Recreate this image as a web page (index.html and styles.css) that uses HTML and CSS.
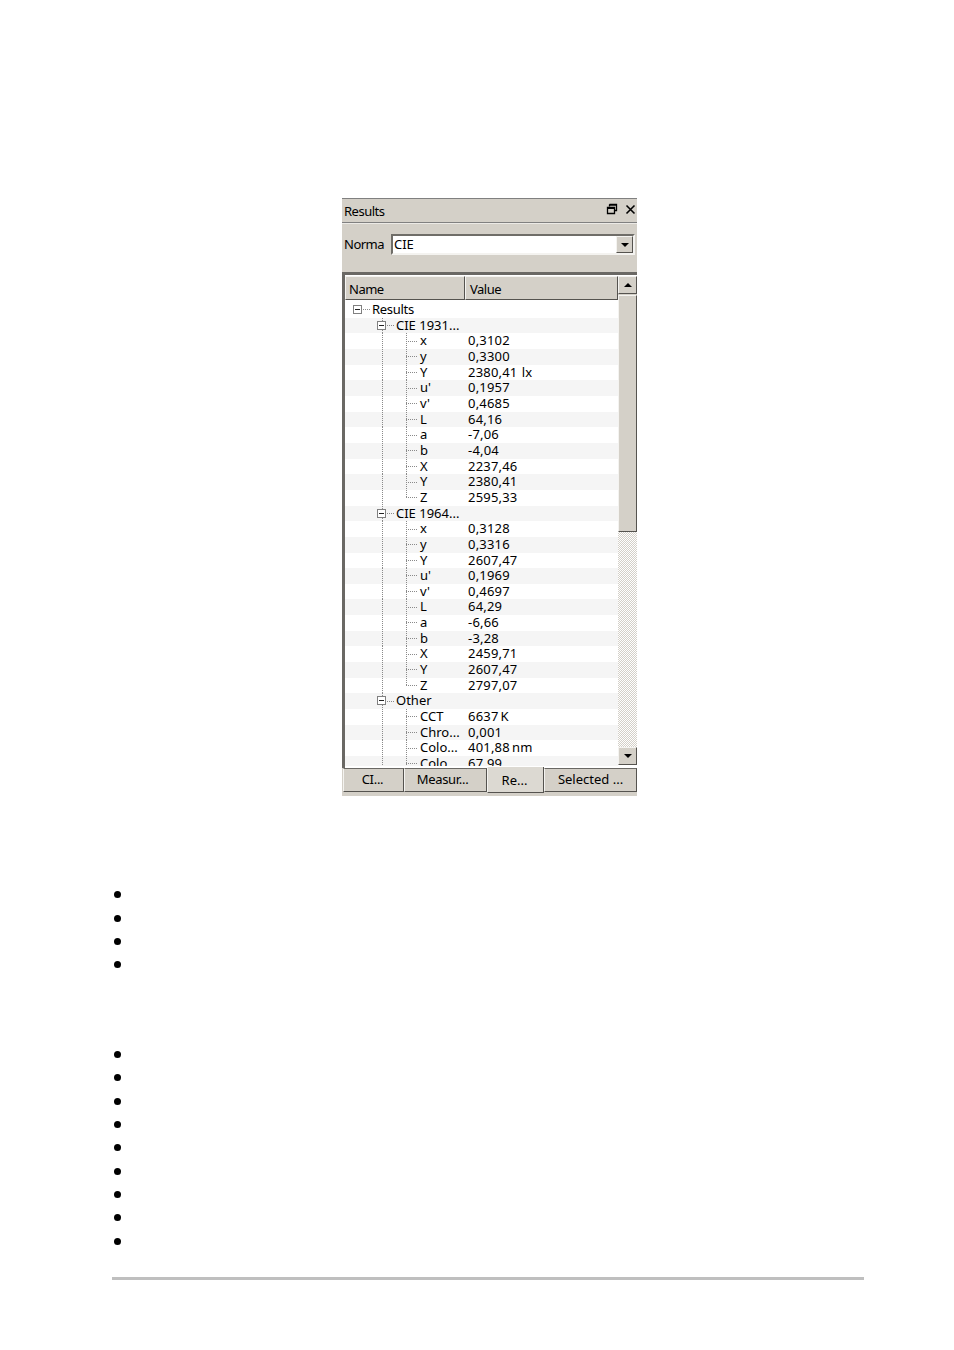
FILE: index.html
```html
<!DOCTYPE html>
<html lang="en">
<head>
    <meta charset="UTF-8">
    <title>Results</title>
    <link rel="stylesheet" href="styles.css">
</head>
<body>
    <div class="page">
        <div class="panel">
            <div class="title-bar">
                <span class="label">Results</span>
                <div class="title-icons">
                    <svg width="12" height="12" viewBox="0 0 12 12"><path d="M3.5 1.5h7v6h-2M3.5 1.5v2M3 2h7.5" fill="none" stroke="#000" stroke-width="1.3"/><path d="M1.5 4.5h7v6h-7z" fill="none" stroke="#000" stroke-width="1.3"/><path d="M1 5.2h8" stroke="#000" stroke-width="1.6"/></svg>
                    <svg width="11" height="11" viewBox="0 0 11 11"><path d="M1.5 1.5l8 8M9.5 1.5l-8 8" stroke="#000" stroke-width="1.6"/></svg>
                </div>
            </div>
            <div class="norma-row">
                <span class="norma-label label">Norma</span>
                <div class="combo">
                    <span class="combo-text">CIE</span>
                    <span class="arrow-btn"><i class="tri-down"></i></span>
                </div>
            </div>
            <div class="tree-frame">
                <div class="tree-main">
                    <div class="tree-head">
                        <div class="head-cell name-cell label">Name</div>
                        <div class="head-cell value-cell label">Value</div>
                    </div>
                    <div class="tree-body">
                        <div class="row root"><span class="box"></span><span>Results</span></div>
                        <div class="row group alt"><span class="box"></span><span>CIE 1931...</span></div>
                        <div class="row leaf"><span>x</span><span>0,3102</span></div>
                        <div class="row leaf alt"><span>y</span><span>0,3300</span></div>
                        <div class="row leaf"><span>Y</span><span>2380,41 &nbsp;lx</span></div>
                        <div class="row leaf alt"><span>u'</span><span>0,1957</span></div>
                        <div class="row leaf"><span>v'</span><span>0,4685</span></div>
                        <div class="row leaf alt"><span>L</span><span>64,16</span></div>
                        <div class="row leaf"><span>a</span><span>-7,06</span></div>
                        <div class="row leaf alt"><span>b</span><span>-4,04</span></div>
                        <div class="row leaf"><span>X</span><span>2237,46</span></div>
                        <div class="row leaf alt"><span>Y</span><span>2380,41</span></div>
                        <div class="row leaf last"><span>Z</span><span>2595,33</span></div>
                        <div class="row group alt"><span class="box"></span><span>CIE 1964...</span></div>
                        <div class="row leaf"><span>x</span><span>0,3128</span></div>
                        <div class="row leaf alt"><span>y</span><span>0,3316</span></div>
                        <div class="row leaf"><span>Y</span><span>2607,47</span></div>
                        <div class="row leaf alt"><span>u'</span><span>0,1969</span></div>
                        <div class="row leaf"><span>v'</span><span>0,4697</span></div>
                        <div class="row leaf alt"><span>L</span><span>64,29</span></div>
                        <div class="row leaf"><span>a</span><span>-6,66</span></div>
                        <div class="row leaf alt"><span>b</span><span>-3,28</span></div>
                        <div class="row leaf"><span>X</span><span>2459,71</span></div>
                        <div class="row leaf alt"><span>Y</span><span>2607,47</span></div>
                        <div class="row leaf last"><span>Z</span><span>2797,07</span></div>
                        <div class="row group alt"><span class="box"></span><span>Other</span></div>
                        <div class="row leaf"><span>CCT</span><span>6637 K</span></div>
                        <div class="row leaf alt"><span>Chro...</span><span>0,001</span></div>
                        <div class="row leaf"><span>Colo...</span><span>401,88 nm</span></div>
                        <div class="row leaf alt"><span>Colo...</span><span>67,99</span></div>
                    </div>
                </div>
                <div class="scrollbar">
                    <span class="arrow-btn scroll-btn"><i class="tri-up"></i></span>
                    <div class="thumb"></div>
                    <div class="track"></div>
                    <span class="arrow-btn scroll-btn"><i class="tri-down"></i></span>
                </div>
            </div>
            <div class="tabs">
                <div class="tab tab-ci">CI...</div>
                <div class="tab tab-measure">Measur...</div>
                <div class="tab tab-active">Re...</div>
                <div class="tab tab-selected">Selected ...</div>
            </div>
        </div>

        <ul class="bullets first-list">
            <li></li>
            <li></li>
            <li></li>
            <li></li>
        </ul>
        <ul class="bullets second-list">
            <li></li>
            <li></li>
            <li></li>
            <li></li>
            <li></li>
            <li></li>
            <li></li>
            <li></li>
            <li></li>
        </ul>
        <div class="footer-rule"></div>
    </div>
</body>
</html>
```

FILE: styles.css
```css
body {
    margin: 0;
    background: #fff;
    font-family: "Noto Sans", sans-serif;
    font-size: 13px;
    color: #000;
}

.page {
    width: 752px;
    margin-left: 112px;
    padding-top: 198px;
}

.label {
    letter-spacing: -0.5px;
}

/* docked window */
.panel {
    width: 295px;
    height: 598px;
    margin-left: 230px;
    background: #d4d0c8;
    display: flex;
    flex-direction: column;
}

.title-bar {
    height: 25px;
    box-sizing: border-box;
    border-top: 1px solid #808080;
    border-bottom: 1px solid #808080;
    padding: 0 1px 0 2px;
    display: flex;
    align-items: center;
    justify-content: space-between;
}

.title-icons {
    display: flex;
    align-items: center;
    gap: 7px;
    margin-top: -3px;
}

.norma-row {
    height: 49px;
    box-sizing: border-box;
    border-top: 1px solid #eceae6;
    padding: 10px 2px 0 2px;
    display: flex;
    align-items: flex-start;
}

.norma-label {
    width: 47px;
    line-height: 20px;
}

.combo {
    flex: 1;
    height: 21px;
    box-sizing: border-box;
    background: #fff;
    border: 2px solid;
    border-color: #6f6d68 #f4f3f0 #f4f3f0 #6f6d68;
    display: flex;
    justify-content: space-between;
}

.combo-text {
    padding-left: 1px;
    line-height: 17px;
}

.arrow-btn {
    width: 17px;
    box-sizing: border-box;
    background: #d4d0c8;
    border: 1px solid;
    border-color: #f4f3f0 #55534f #55534f #f4f3f0;
    display: flex;
    align-items: center;
    justify-content: center;
}

.tri-down,
.tri-up {
    width: 0;
    height: 0;
    border-left: 4px solid transparent;
    border-right: 4px solid transparent;
}

.tri-down {
    border-top: 4px solid #000;
}

.tri-up {
    border-bottom: 4px solid #000;
}

/* tree and its scrollbar */
.tree-frame {
    height: 496px;
    box-sizing: border-box;
    border-top: 3px solid #6a6864;
    border-left: 3px solid #6a6864;
    padding-top: 1px;
    display: flex;
    background: #fff;
    overflow: hidden;
}

.tree-main {
    width: 273px;
    flex: none;
}

.tree-head {
    height: 24px;
    background: #d4d0c8;
    display: flex;
}

.head-cell {
    box-sizing: border-box;
    border: 1px solid;
    border-color: #f4f3f0 #55534f #55534f #f4f3f0;
    padding-left: 3px;
    line-height: 24px;
}

.name-cell {
    width: 120px;
}

.value-cell {
    flex: 1;
    padding-left: 4px;
}

.tree-body {
    height: 466px;
    box-sizing: border-box;
    padding-top: 2px;
    overflow: hidden;
}

.row {
    height: 15.66px;
    line-height: 15.66px;
    display: grid;
    grid-template-columns: 48px 1fr;
    white-space: nowrap;
    --dots-y: repeating-linear-gradient(#8a8a8a 0 1px, transparent 1px 2px);
    --dots-x: repeating-linear-gradient(90deg, #8a8a8a 0 1px, transparent 1px 2px);
}

.row.alt {
    background-color: #f5f5f5;
}

.root {
    grid-template-columns: 19px 1fr;
    padding-left: 8px;
    letter-spacing: -0.3px;
    background-image: var(--dots-x);
    background-size: 8px 1px;
    background-position: 18px 50%;
    background-repeat: no-repeat;
}

.group {
    grid-template-columns: 19px 1fr;
    padding-left: 32px;
    background-image: var(--dots-y), var(--dots-x);
    background-size: 1px 100%, 8px 1px;
    background-position: 37px 0, 42px 50%;
    background-repeat: no-repeat;
}

.leaf {
    padding-left: 75px;
    background-image: var(--dots-y), var(--dots-y), var(--dots-x);
    background-size: 1px 100%, 1px 100%, 11px 1px;
    background-position: 37px 0, 61px 0, 61px 50%;
    background-repeat: no-repeat;
}

.leaf.last {
    background-size: 1px 100%, 1px 50%, 11px 1px;
}

.leaf span:last-child {
    letter-spacing: 0.2px;
    word-spacing: -1.5px;
}

.box {
    width: 9px;
    height: 9px;
    margin-top: 3px;
    box-sizing: border-box;
    border: 1px solid #808080;
    background: linear-gradient(#222, #222) center / 5px 1px no-repeat #fff;
}

.scrollbar {
    width: 19px;
    flex: none;
    height: 489px;
    display: flex;
    flex-direction: column;
    background: #d4d0c8;
}

.scroll-btn {
    width: 19px;
    height: 18px;
    flex: none;
}

.thumb {
    height: 237px;
    flex: none;
    margin-top: 1px;
    box-sizing: border-box;
    border: 1px solid;
    border-color: #f4f3f0 #55534f #55534f #f4f3f0;
    background: #d4d0c8;
}

.track {
    flex: 1;
    background: repeating-conic-gradient(#d4d0c8 0 25%, #fff 0 50%) 0 0 / 2px 2px;
}

/* tabs under the tree */
.tabs {
    height: 28px;
    padding-left: 1px;
    display: flex;
    align-items: flex-start;
}

.tab {
    height: 24px;
    box-sizing: border-box;
    background: #d4d0c8;
    border: 1px solid;
    border-color: #f4f3f0 #55534f #55534f #f4f3f0;
    border-top: 1px solid #6a6864;
    line-height: 21px;
    text-align: center;
    letter-spacing: -0.3px;
}

.tab-ci {
    width: 61px;
    padding-right: 2px;
}

.tab-measure {
    width: 83px;
    padding-right: 6px;
}

.tab-active {
    width: 57px;
    height: 26px;
    border-top: 0;
    line-height: 27px;
    margin-top: -1px;
    padding-right: 2px;
    letter-spacing: 0;
    background: #dcd9d2;
}

.tab-selected {
    width: 93px;
    letter-spacing: 0;
}

/* empty bullet lists below the window */
.bullets {
    list-style: none;
    margin: 0;
    padding: 0;
}

.bullets li {
    height: 23.4px;
    display: flex;
    align-items: center;
}

.bullets li::before {
    content: "";
    width: 7px;
    height: 7px;
    margin-left: 2.4px;
    border-radius: 50%;
    background: #000;
}

.first-list {
    margin-top: 87px;
}

.second-list {
    margin-top: 66px;
}

.footer-rule {
    height: 3px;
    margin-top: 24px;
    background: #bfbfbf;
}
```
